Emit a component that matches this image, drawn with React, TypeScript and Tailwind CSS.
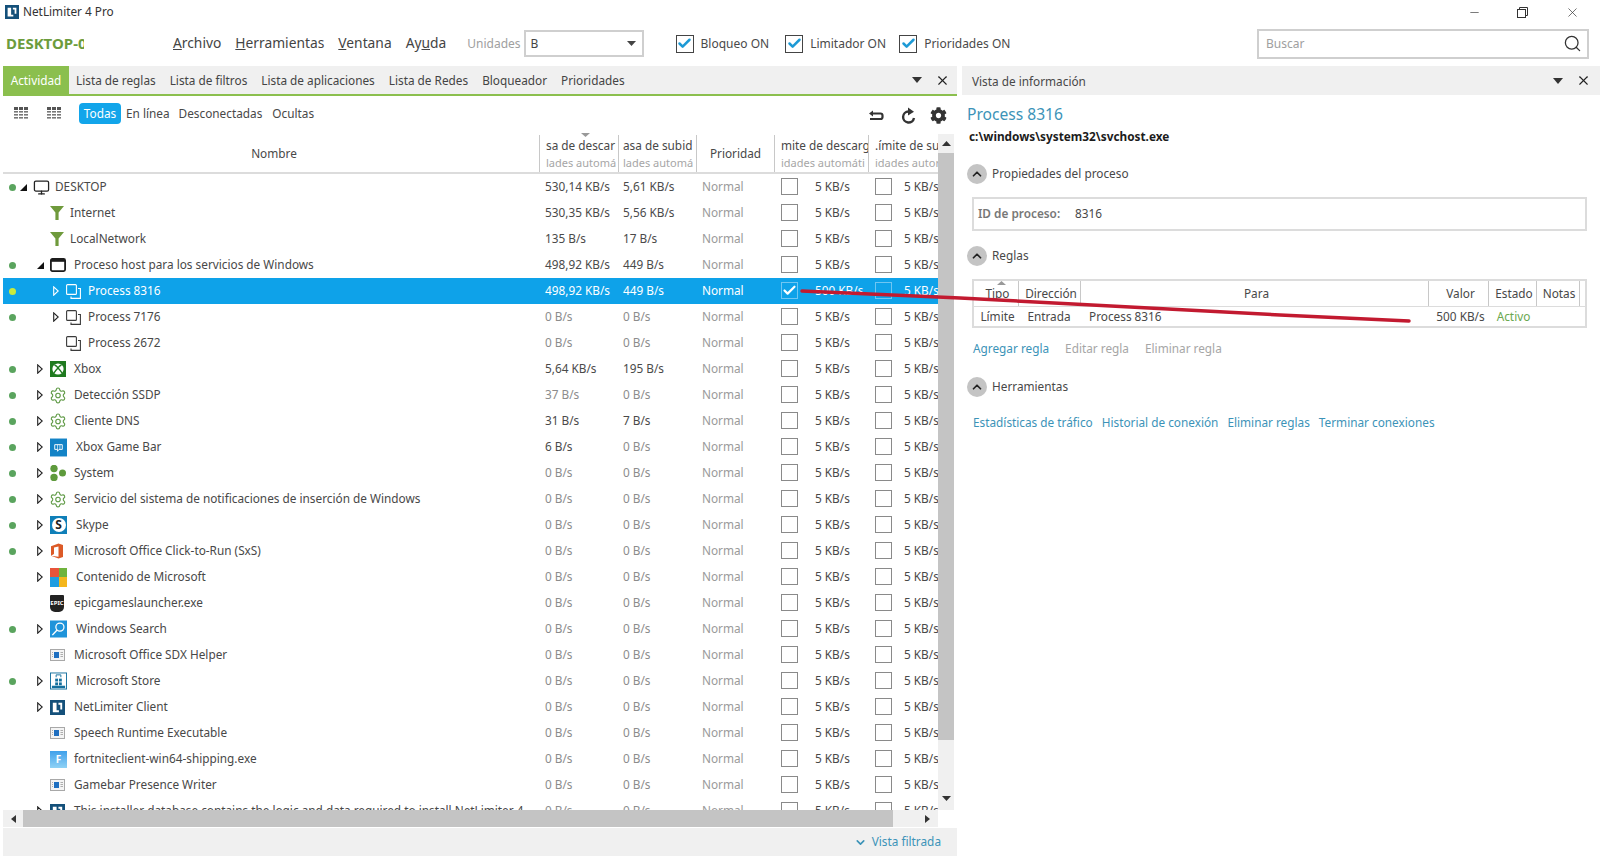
import { ChevronUp, ChevronDown, Check, Monitor, Search, X, Minus, Settings } from 'lucide-react'
import { FaCog } from 'react-icons/fa'
import type { ReactNode } from 'react'

type IconName =
  | 'monitor' | 'filter' | 'window' | 'proc' | 'xbox' | 'gear' | 'gamebar' | 'system' | 'skype'
  | 'office' | 'ms' | 'epic' | 'search' | 'app' | 'store' | 'nl' | 'fortnite'

type RowData = {
  name: string
  icon: IconName
  level: 0 | 1 | 2
  dot?: boolean
  exp?: 'open' | 'closed'
  down: string
  up: string
  gap?: string
  selected?: boolean
  dim?: boolean
}

const rows: RowData[] = [
  { name: 'DESKTOP', icon: 'monitor', level: 0, dot: true, exp: 'open', down: '530,14 KB/s', up: '5,61 KB/s' },
  { name: 'Internet', icon: 'filter', level: 1, down: '530,35 KB/s', up: '5,56 KB/s', gap: 'ml-[3px]' },
  { name: 'LocalNetwork', icon: 'filter', level: 1, down: '135 B/s', up: '17 B/s', gap: 'ml-[3px]' },
  { name: 'Proceso host para los servicios de Windows', icon: 'window', level: 1, dot: true, exp: 'open', down: '498,92 KB/s', up: '449 B/s' },
  { name: 'Process 8316', icon: 'proc', level: 2, dot: true, exp: 'closed', down: '498,92 KB/s', up: '449 B/s', selected: true },
  { name: 'Process 7176', icon: 'proc', level: 2, dot: true, exp: 'closed', down: '0 B/s', up: '0 B/s', dim: true },
  { name: 'Process 2672', icon: 'proc', level: 2, down: '0 B/s', up: '0 B/s', dim: true },
  { name: 'Xbox', icon: 'xbox', level: 1, dot: true, exp: 'closed', down: '5,64 KB/s', up: '195 B/s' },
  { name: 'Detección SSDP', icon: 'gear', level: 1, dot: true, exp: 'closed', down: '37 B/s', up: '0 B/s', dim: true },
  { name: 'Cliente DNS', icon: 'gear', level: 1, dot: true, exp: 'closed', down: '31 B/s', up: '7 B/s' },
  { name: 'Xbox Game Bar', icon: 'gamebar', level: 1, dot: true, exp: 'closed', down: '6 B/s', up: '0 B/s', gap: 'ml-[9px]' },
  { name: 'System', icon: 'system', level: 1, dot: true, exp: 'closed', down: '0 B/s', up: '0 B/s', dim: true },
  { name: 'Servicio del sistema de notificaciones de inserción de Windows', icon: 'gear', level: 1, dot: true, exp: 'closed', down: '0 B/s', up: '0 B/s', dim: true },
  { name: 'Skype', icon: 'skype', level: 1, dot: true, exp: 'closed', down: '0 B/s', up: '0 B/s', dim: true, gap: 'ml-[9px]' },
  { name: 'Microsoft Office Click-to-Run (SxS)', icon: 'office', level: 1, dot: true, exp: 'closed', down: '0 B/s', up: '0 B/s', dim: true },
  { name: 'Contenido de Microsoft', icon: 'ms', level: 1, exp: 'closed', down: '0 B/s', up: '0 B/s', dim: true, gap: 'ml-[9px]' },
  { name: 'epicgameslauncher.exe', icon: 'epic', level: 1, down: '0 B/s', up: '0 B/s', dim: true },
  { name: 'Windows Search', icon: 'search', level: 1, dot: true, exp: 'closed', down: '0 B/s', up: '0 B/s', dim: true, gap: 'ml-[9px]' },
  { name: 'Microsoft Office SDX Helper', icon: 'app', level: 1, down: '0 B/s', up: '0 B/s', dim: true },
  { name: 'Microsoft Store', icon: 'store', level: 1, dot: true, exp: 'closed', down: '0 B/s', up: '0 B/s', dim: true, gap: 'ml-[9px]' },
  { name: 'NetLimiter Client', icon: 'nl', level: 1, exp: 'closed', down: '0 B/s', up: '0 B/s', dim: true },
  { name: 'Speech Runtime Executable', icon: 'app', level: 1, down: '0 B/s', up: '0 B/s', dim: true },
  { name: 'fortniteclient-win64-shipping.exe', icon: 'fortnite', level: 1, down: '0 B/s', up: '0 B/s', dim: true },
  { name: 'Gamebar Presence Writer', icon: 'app', level: 1, down: '0 B/s', up: '0 B/s', dim: true },
  { name: 'This installer database contains the logic and data required to install NetLimiter 4', icon: 'nl', level: 1, exp: 'closed', down: '0 B/s', up: '0 B/s', dim: true },
]

const indent = { 0: 'w-0', 1: 'w-[17px]', 2: 'w-[33px]' }

function NlLogo({ size = 16 }: { size?: number }) {
  return (
    <svg width={size} height={size} viewBox="0 0 16 16">
      <rect width="16" height="16" fill="#14507a" />
      <path d="M3 3h4v8h2.5v2H3zM9 3h4v7h-2V5H9z" fill="#fff" />
    </svg>
  )
}

function RowIcon({ name, selected }: { name: IconName; selected?: boolean }) {
  const line = selected ? '#ffffff' : '#3a3a3a'
  switch (name) {
    case 'monitor':
      return <Monitor size={17} strokeWidth={1.8} color="#222" />
    case 'filter':
      return (
        <svg width="14" height="16" viewBox="0 0 14 16">
          <path d="M0 1h14L8.6 7.5V15H5.4V7.500z" fill="#6f9a3c" />
        </svg>
      )
    case 'window':
      return (
        <svg width="16" height="16" viewBox="0 0 16 16">
          <rect x="0.900" y="1.900" width="14.200" height="12.200" rx="1.500" fill="none" stroke="#1c1c1c" strokeWidth="1.800" />
          <rect x="1" y="2" width="14" height="2.800" fill="#1c1c1c" />
        </svg>
      )
    case 'proc':
      return (
        <svg width="15" height="15" viewBox="0 0 15 15" fill="none" stroke={line} strokeWidth="1.100">
          <rect x="0.600" y="0.600" width="9.800" height="9.800" rx="1" />
          <path d="M12 4.500h2.400v9.900H5v-2" />
        </svg>
      )
    case 'xbox':
      return (
        <svg width="16" height="16" viewBox="0 0 16 16">
          <rect width="16" height="16" fill="#1f7a1f" />
          <circle cx="8" cy="8" r="5.600" fill="#fff" />
          <path d="M4.500 4c2 .6 3 2 3.500 2.800C8.500 6 9.500 4.600 11.500 4M4 12c1.200-2.400 2.800-3.800 4-5 1.200 1.200 2.800 2.600 4 5" fill="none" stroke="#1f7a1f" strokeWidth="1.400" />
        </svg>
      )
    case 'gear':
      return <Settings size={19} strokeWidth={1.5} color="#5f9a45" className="-ml-px" />
    case 'gamebar':
      return (
        <svg width="18" height="19" viewBox="0 0 18 19">
          <rect width="18" height="19" fill="#1383c6" />
          <path d="M5 6.500h8v5H9.500L8 13.500v-2H5z" fill="none" stroke="#fff" strokeWidth="1" />
          <path d="M8 6.500v5M10.500 6.500v5" stroke="#fff" strokeWidth="0.700" />
        </svg>
      )
    case 'system':
      return (
        <svg width="16" height="16" viewBox="0 0 16 16" fill="#5e9a3c">
          <circle cx="4" cy="3.500" r="3.700" />
          <circle cx="4" cy="12.500" r="3.700" />
          <circle cx="12.500" cy="8" r="3.500" />
        </svg>
      )
    case 'skype':
      return (
        <span className="flex h-[18px] w-[18px] items-center justify-center bg-[#0f7fb8]">
          <span className="flex h-[14px] w-[14px] items-center justify-center rounded-full bg-white text-[12px] font-bold leading-none text-[#222]">S</span>
        </span>
      )
    case 'office':
      return (
        <svg width="14" height="16" viewBox="0 0 14 16">
          <path d="M1 3.300L8.500 0.500 13 2v12l-4.500 1.500L1 12.700l7.500 1V3.500L4 4.500v6.500L1 12.700z" fill="#dc5a27" />
        </svg>
      )
    case 'ms':
      return (
        <span className="grid h-[19px] w-[18px] grid-cols-2 grid-rows-2">
          <span className="bg-[#e8543a]" />
          <span className="bg-[#6fb33c]" />
          <span className="bg-[#1f9de0]" />
          <span className="bg-[#f4b61c]" />
        </span>
      )
    case 'epic':
      return (
        <span className="flex h-[17px] w-[14px] items-center justify-center rounded-b-[5px] rounded-t-[1px] bg-[#222] text-[6px] font-bold leading-none text-white">EPIC</span>
      )
    case 'search':
      return (
        <svg width="18" height="18" viewBox="0 0 18 18">
          <rect width="18" height="18" fill="#1f94da" />
          <circle cx="10.500" cy="7" r="4.300" fill="none" stroke="#fff" strokeWidth="1.300" />
          <path d="M7.500 10L2.500 15.500" stroke="#fff" strokeWidth="1.500" />
        </svg>
      )
    case 'app':
      return (
        <svg width="15" height="12" viewBox="0 0 15 12">
          <rect x="0.500" y="0.500" width="14" height="11" fill="#f4f4f4" stroke="#a8a8a8" />
          <rect x="4" y="3" width="5" height="6" fill="#1f6fc0" />
          <path d="M10.500 3.500h2.500M10.500 5.500h2.500M10.500 7.500h2.500M2 3.500h1M2 5.500h1M2 7.500h1" stroke="#9a9a9a" strokeWidth="0.800" />
        </svg>
      )
    case 'store':
      return (
        <svg width="18" height="18" viewBox="0 0 18 18">
          <rect x="0.500" y="0.500" width="17" height="17" fill="#fff" stroke="#15709e" />
          <rect x="2" y="14" width="14" height="2.500" fill="#15709e" />
          <path d="M6.500 5V2.500h5V5" fill="none" stroke="#15709e" />
          <rect x="5.500" y="6.500" width="3" height="3" fill="#15709e" />
          <rect x="9.500" y="6.500" width="3" height="3" fill="#15709e" />
          <rect x="5.500" y="10.500" width="3" height="3" fill="#15709e" />
          <rect x="9.500" y="10.500" width="3" height="3" fill="#15709e" />
        </svg>
      )
    case 'nl':
      return <NlLogo size={15} />
    case 'fortnite':
      return (
        <span className="flex h-[17px] w-[17px] items-center justify-center bg-gradient-to-b from-[#3ea0ea] to-[#8fd2f5] text-[10px] font-bold leading-none text-white">F</span>
      )
  }
}

function Expander({ kind, selected }: { kind?: 'open' | 'closed'; selected?: boolean }) {
  if (kind === 'open') {
    return (
      <svg width="7" height="7" viewBox="0 0 7 7">
        <path d="M7 0v7H0z" fill="#111" />
      </svg>
    )
  }
  if (kind === 'closed') {
    return (
      <svg width="6" height="10" viewBox="0 0 6 10">
        <path d="M0.700 0.800L5.200 5 0.700 9.200z" fill="none" stroke={selected ? '#fff' : '#222'} strokeWidth="1.100" />
      </svg>
    )
  }
  return null
}

function Box({ checked, selected }: { checked?: boolean; selected?: boolean }) {
  const border = selected ? 'border-[#6fc6f2]' : 'border-[#8a8a8a]'
  return (
    <span className={`mb-[2px] flex h-[17px] w-[17px] shrink-0 items-center justify-center border ${border}`}>
      {checked && <Check size={15} strokeWidth={3.5} color="#fff" />}
    </span>
  )
}

function Row({ row }: { row: RowData }) {
  const sel = row.selected
  const rate = sel ? 'text-white' : row.dim ? 'text-[#8c8c8c]' : 'text-[#4a4a4a]'
  const upRate = sel ? 'text-white' : row.dim || row.up === '0 B/s' ? 'text-[#8c8c8c]' : 'text-[#4a4a4a]'
  return (
    <div className={`flex h-[26px] w-[935px] shrink-0 items-center text-[11.8px] ${sel ? 'bg-[#0ea2e9] text-white' : 'text-[#484848]'}`}>
      <div className="flex w-[537px] shrink-0 items-center overflow-hidden whitespace-nowrap">
        <span className="flex w-[13px] shrink-0 justify-end">
          {row.dot && <span className={`h-[7px] w-[7px] rounded-full ${sel ? 'bg-[#c8ea3e]' : 'bg-[#5aa45e]'}`} />}
        </span>
        <span className={`shrink-0 ${indent[row.level]}`} />
        <span className="flex w-[14px] shrink-0 items-center justify-center">
          <Expander kind={row.exp} selected={sel} />
        </span>
        <span className="ml-[3px] flex w-[17px] shrink-0 items-center justify-start">
          <RowIcon name={row.icon} selected={sel} />
        </span>
        <span className={row.gap ?? (row.level === 1 ? 'ml-[7px]' : 'ml-[5px]')}>{row.name}</span>
      </div>
      <div className={`w-[79px] shrink-0 whitespace-nowrap pl-[5px] ${rate}`}>{row.down}</div>
      <div className={`w-[78px] shrink-0 whitespace-nowrap pl-[4px] ${upRate}`}>{row.up}</div>
      <div className={`w-[78px] shrink-0 pl-[5px] ${sel ? 'text-white' : 'text-[#9a9a9a]'}`}>Normal</div>
      <div className="flex w-[94px] shrink-0 items-center pl-[6px]">
        <Box checked={sel} selected={sel} />
        <span className="ml-[17px] whitespace-nowrap">{sel ? '500 KB/s' : '5 KB/s'}</span>
      </div>
      <div className="flex w-[69px] shrink-0 items-center overflow-hidden pl-[6px]">
        <Box selected={sel} />
        <span className="ml-[12px] whitespace-nowrap">5 KB/s</span>
      </div>
    </div>
  )
}

function HeaderCell({ w, top, bottom, pad, noBorder }: { w: string; top: string; bottom: string; pad: string; noBorder?: boolean }) {
  return (
    <div className={`flex h-full shrink-0 flex-col justify-center overflow-hidden whitespace-nowrap ${noBorder ? '' : 'border-r border-[#c8c8c8]'} ${w} ${pad}`}>
      <span className="leading-[17px] text-[#484848]">{top}</span>
      <span className="text-[11px] leading-[17px] text-[#a6a6a6]">{bottom}</span>
    </div>
  )
}

function ToggleCheck({ label, className }: { label: string; className?: string }) {
  return (
    <label className={`flex items-center ${className ?? ''}`}>
      <span className="flex h-[18px] w-[18px] items-center justify-center border border-[#444]">
        <Check size={15} strokeWidth={4} color="#1d9ad6" />
      </span>
      <span className="ml-[7px] text-[12px] text-[#4a4a4a]">{label}</span>
    </label>
  )
}

function GridIcon() {
  return (
    <svg width="14" height="13" viewBox="0 0 14 13">
      {[0, 1, 2, 3].map((r) =>
        [0, 1, 2].map((c) => (
          <rect
            key={`${r}-${c}`}
            x={c * 5}
            y={r === 0 ? 0 : r * 3 + 1}
            width="4"
            height={r === 0 ? 3 : 1.6}
            fill={r === 0 ? '#555' : '#777'}
          />
        )),
      )}
    </svg>
  )
}

function BackIcon() {
  return (
    <svg width="15" height="12" viewBox="0 0 15 12" className="ml-auto mt-[4px]">
      <path d="M3 3.500h8.500a2 2 0 0 1 2 2v1.500a2 2 0 0 1-2 2H1" fill="none" stroke="#333" strokeWidth="2.200" />
      <path d="M0 3.500L4 0.500v6z" fill="#333" />
    </svg>
  )
}

function RefreshIcon() {
  return (
    <svg width="17" height="18" viewBox="0 0 17 18" className="ml-[16px] mt-[4px]">
      <path d="M8.500 4.500a5.500 5.500 0 1 0 5.500 6.500" fill="none" stroke="#333" strokeWidth="2.400" />
      <path d="M8 0.500l6 4.200-6 3.800z" fill="#333" />
    </svg>
  )
}

function Section({ title }: { title: string }) {
  return (
    <div className="flex items-center">
      <span className="flex h-[20px] w-[20px] items-center justify-center rounded-full bg-[#c4c4c4]">
        <ChevronUp size={14} strokeWidth={3} color="#222" />
      </span>
      <span className="ml-[5px] text-[11.8px] text-[#484848]">{title}</span>
    </div>
  )
}

function PanelHeader({ children, h, closeGap }: { children: ReactNode; h: string; closeGap: string }) {
  return (
    <div className={`flex items-center bg-[#f0f0f0] ${h}`}>
      <div className="flex h-full flex-1 items-center overflow-hidden">{children}</div>
      <svg width="10" height="6" viewBox="0 0 10 6" className="ml-auto">
        <path d="M0 0h10L5 6z" fill="#333" />
      </svg>
      <X size={15} strokeWidth={1.8} color="#222" className={`ml-[13px] ${closeGap}`} />
    </div>
  )
}

export default function App() {
  return (
    <div className="relative flex h-[858px] w-[1600px] flex-col overflow-hidden bg-white [font-family:'Noto_Sans',sans-serif] text-[12px]">
      {/* title bar */}
      <div className="flex h-[24px] items-center pl-[5px]">
        <NlLogo size={14} />
        <span className="ml-[4px] text-[11.8px] text-[#333]">NetLimiter 4 Pro</span>
        <div className="ml-auto flex items-center">
          <Minus size={13} strokeWidth={1.2} color="#333" className="mr-[36px]" />
          <svg width="11" height="11" viewBox="0 0 11 11" fill="none" stroke="#333" className="mr-[37px]">
            <rect x="0.500" y="2.500" width="8" height="8" />
            <path d="M2.500 2.500v-2h8v8h-2" />
          </svg>
          <X size={15} strokeWidth={1.1} color="#333" className="mr-[20px]" />
        </div>
      </div>

      {/* menu row */}
      <div className="mb-[3px] flex h-[39px] items-center">
        <span className="ml-[6px] w-[78px] overflow-hidden whitespace-nowrap text-[15px] font-bold text-[#6c9c3c]">DESKTOP-0G4</span>
        <nav className="ml-[89px] flex items-center gap-[14px] text-[13.8px] text-[#444]">
          <span><u>A</u>rchivo</span>
          <span><u>H</u>erramientas</span>
          <span><u>V</u>entana</span>
          <span>Ay<u>u</u>da</span>
        </nav>
        <span className="ml-[21px] text-[12px] text-[#a0a0a0]">Unidades</span>
        <div className="ml-[3px] flex h-[27px] w-[120px] items-center border-2 border-[#cfcfcf] pl-[5px] pr-[6px] text-[12px] text-[#444]">
          B
          <svg width="9" height="5" viewBox="0 0 9 5" className="ml-auto">
            <path d="M0 0h9L4.500 5z" fill="#444" />
          </svg>
        </div>
        <ToggleCheck label="Bloqueo ON" className="ml-[32px]" />
        <ToggleCheck label="Limitador ON" className="ml-[16px]" />
        <ToggleCheck label="Prioridades ON" className="ml-[13px]" />
        <div className="ml-auto mr-[11px] flex h-[30px] w-[332px] items-center border-2 border-[#cfcfcf] pl-[7px] pr-[5px] text-[12px] text-[#a0a0a0]">
          Buscar
          <Search size={19} strokeWidth={1.6} color="#333" className="ml-auto" />
        </div>
      </div>

      <div className="flex min-h-0 flex-1 pl-[3px]">
        {/* left panel */}
        <div className="flex w-[954px] shrink-0 flex-col">
          <div className="border-b-2 border-[#8bbf4e]">
            <PanelHeader h="h-[28px]" closeGap="mr-[7px]">
              <span className="flex h-full w-[66px] items-center justify-center bg-[#8bbf4e] pt-[2px] text-[11.8px] text-white">Actividad</span>
              <nav className="ml-[7px] flex items-center gap-[14px] whitespace-nowrap pt-[2px] text-[11.8px] text-[#444]">
                <span>Lista de reglas</span>
                <span>Lista de filtros</span>
                <span>Lista de aplicaciones</span>
                <span>Lista de Redes</span>
                <span>Bloqueador</span>
                <span>Prioridades</span>
              </nav>
            </PanelHeader>
          </div>

          <div className="flex h-[38px] items-center pb-[3px] pl-[11px] pr-[10px]">
            <GridIcon />
            <span className="ml-[19px]"><GridIcon /></span>
            <span className="ml-[18px] flex h-[21px] w-[42px] items-center justify-center rounded-[4px] bg-[#12a5ea] text-[11.8px] text-white">Todas</span>
            <span className="ml-[5px] text-[11.8px] text-[#484848]">En línea</span>
            <span className="ml-[9px] text-[11.8px] text-[#484848]">Desconectadas</span>
            <span className="ml-[10px] text-[11.8px] text-[#484848]">Ocultas</span>
            <BackIcon />
            <RefreshIcon />
            <FaCog size={17} color="#333" className="ml-[13px] mt-[4px]" />
          </div>

          <div className="flex h-[693px] shrink-0">
            <div className="flex w-[935px] shrink-0 flex-col overflow-hidden">
              <div className="flex h-[40px] shrink-0 items-stretch border-b-2 border-[#dcdcdc] pt-px text-[11.8px]">
                <div className="flex w-[537px] shrink-0 items-center justify-center border-r border-[#c8c8c8] pl-[6px] text-[#484848]">Nombre</div>
                <HeaderCell w="w-[79px]" top="sa de descar" bottom="lades automá" pad="pl-[6px]" />
                <HeaderCell w="w-[78px]" top="asa de subid" bottom="lades automá" pad="pl-[4px]" />
                <div className="flex w-[78px] shrink-0 items-center justify-center border-r border-[#c8c8c8] text-[#484848]">Prioridad</div>
                <HeaderCell w="w-[94px]" top="mite de descarg" bottom="idades automáti" pad="pl-[6px]" />
                <HeaderCell w="w-[69px]" top=".ímite de su" bottom="idades autor" pad="pl-[6px]" noBorder />
              </div>
              <div className="h-[636px] shrink-0 overflow-hidden">
                {rows.map((r) => (
                  <Row key={r.name} row={r} />
                ))}
              </div>
              <div className="flex h-[17px] shrink-0 items-center bg-[#f0f0f0]">
                <svg width="5" height="8" viewBox="0 0 5 8" className="ml-[8px]">
                  <path d="M5 0v8L0 4z" fill="#333" />
                </svg>
                <span className="ml-[7px] h-full w-[870px] bg-[#c4c4c4]" />
                <svg width="5" height="8" viewBox="0 0 5 8" className="ml-[32px]">
                  <path d="M0 0v8l5-4z" fill="#333" />
                </svg>
              </div>
            </div>
            <div className="flex h-[676px] w-[16px] shrink-0 flex-col items-center bg-[#f0f0f0]">
              <svg width="9" height="5" viewBox="0 0 9 5" className="mt-[7px]">
                <path d="M0 5h9L4.500 0z" fill="#333" />
              </svg>
              <span className="mt-[7px] h-[587px] w-full bg-[#c4c4c4]" />
              <svg width="9" height="5" viewBox="0 0 9 5" className="mt-[56px]">
                <path d="M0 0h9L4.500 5z" fill="#333" />
              </svg>
            </div>
          </div>

          <div className="mt-px flex h-[28px] items-center justify-end bg-[#f0f0f0] pr-[16px] text-[11.8px] text-[#3c93b8]">
            <ChevronDown size={13} strokeWidth={3} className="mr-[5px]" />
            Vista filtrada
          </div>
        </div>

        {/* right panel */}
        <div className="ml-[5px] flex min-w-0 flex-1 flex-col">
          <PanelHeader h="h-[29px]" closeGap="mr-[9px]">
            <span className="ml-[10px] pt-[3px] text-[11.8px] text-[#484848]">Vista de información</span>
          </PanelHeader>
          <div className="flex flex-col pl-[5px] pr-[13px]">
            <span className="mt-[7px] text-[15.6px] leading-[24px] text-[#3c93b8]">Process 8316</span>
            <span className="ml-[2px] mt-[1px] text-[11.8px] font-bold leading-[18px] text-[#1c1c1c]">c:\windows\system32\svchost.exe</span>
            <div className="mt-[19px]"><Section title="Propiedades del proceso" /></div>
            <div className="ml-[5px] mt-[13px] flex h-[34px] items-center border-2 border-[#dcdcdc] pl-[4px] text-[11.8px]">
              <span className="w-[97px] font-semibold text-[#777]">ID de proceso:</span>
              <span className="text-[#484848]">8316</span>
            </div>
            <div className="mt-[15px]"><Section title="Reglas" /></div>
            <div className="ml-[5px] mt-[13px] flex h-[49px] flex-col border-2 border-[#dcdcdc] text-[11.8px] text-[#484848]">
              <div className="flex h-[26px] shrink-0 items-stretch border-b border-[#dcdcdc]">
                <span className="flex w-[45px] items-center justify-center border-r border-[#c8c8c8] pl-[3px]">Tipo</span>
                <span className="flex w-[62px] items-center justify-center border-r border-[#c8c8c8] pl-[3px]">Dirección</span>
                <span className="flex w-[348px] items-center justify-center border-r border-[#c8c8c8] pl-[4px]">Para</span>
                <span className="flex w-[60px] items-center justify-center border-r border-[#c8c8c8] pl-[4px]">Valor</span>
                <span className="flex w-[48px] items-center justify-center border-r border-[#c8c8c8] pl-[3px]">Estado</span>
                <span className="flex w-[43px] items-center justify-center border-r border-[#c8c8c8] pl-[2px]">Notas</span>
              </div>
              <div className="flex flex-1 items-center">
                <span className="flex w-[45px] justify-center pl-[2px]">Límite</span>
                <span className="flex w-[62px] justify-center pr-[2px]">Entrada</span>
                <span className="w-[348px] pl-[8px]">Process 8316</span>
                <span className="flex w-[60px] justify-center pl-[3px]">500 KB/s</span>
                <span className="flex w-[48px] justify-center pl-[1px] text-[#6aa84f]">Activo</span>
              </div>
            </div>
            <div className="ml-[6px] mt-[12px] flex gap-[16px] text-[11.8px] text-[#a6a6a6]">
              <span className="text-[#3c93b8]">Agregar regla</span>
              <span>Editar regla</span>
              <span>Eliminar regla</span>
            </div>
            <div className="mt-[19px]"><Section title="Herramientas" /></div>
            <div className="ml-[6px] mt-[17px] flex gap-[9px] text-[11.8px] text-[#3c93b8]">
              <span>Estadísticas de tráfico</span>
              <span>Historial de conexión</span>
              <span>Eliminar reglas</span>
              <span>Terminar conexiones</span>
            </div>
          </div>
        </div>
      </div>

      {/* sort markers */}
      <svg width="9" height="4" viewBox="0 0 9 4" className="absolute left-[581px] top-[133px]">
        <path d="M0 0h9L4.500 4z" fill="#999" />
      </svg>
      <svg width="9" height="4" viewBox="0 0 9 4" className="absolute left-[997px] top-[281px]">
        <path d="M0 4h9L4.500 0z" fill="#999" />
      </svg>

      {/* hand-drawn annotation */}
      <svg width="1600" height="858" viewBox="0 0 1600 858" className="pointer-events-none absolute left-0 top-0">
        <path d="M802 291L960 298L1130 307L1280 315L1409 321" fill="none" stroke="#c21a30" strokeWidth="3.500" strokeLinecap="round" />
      </svg>
    </div>
  )
}
